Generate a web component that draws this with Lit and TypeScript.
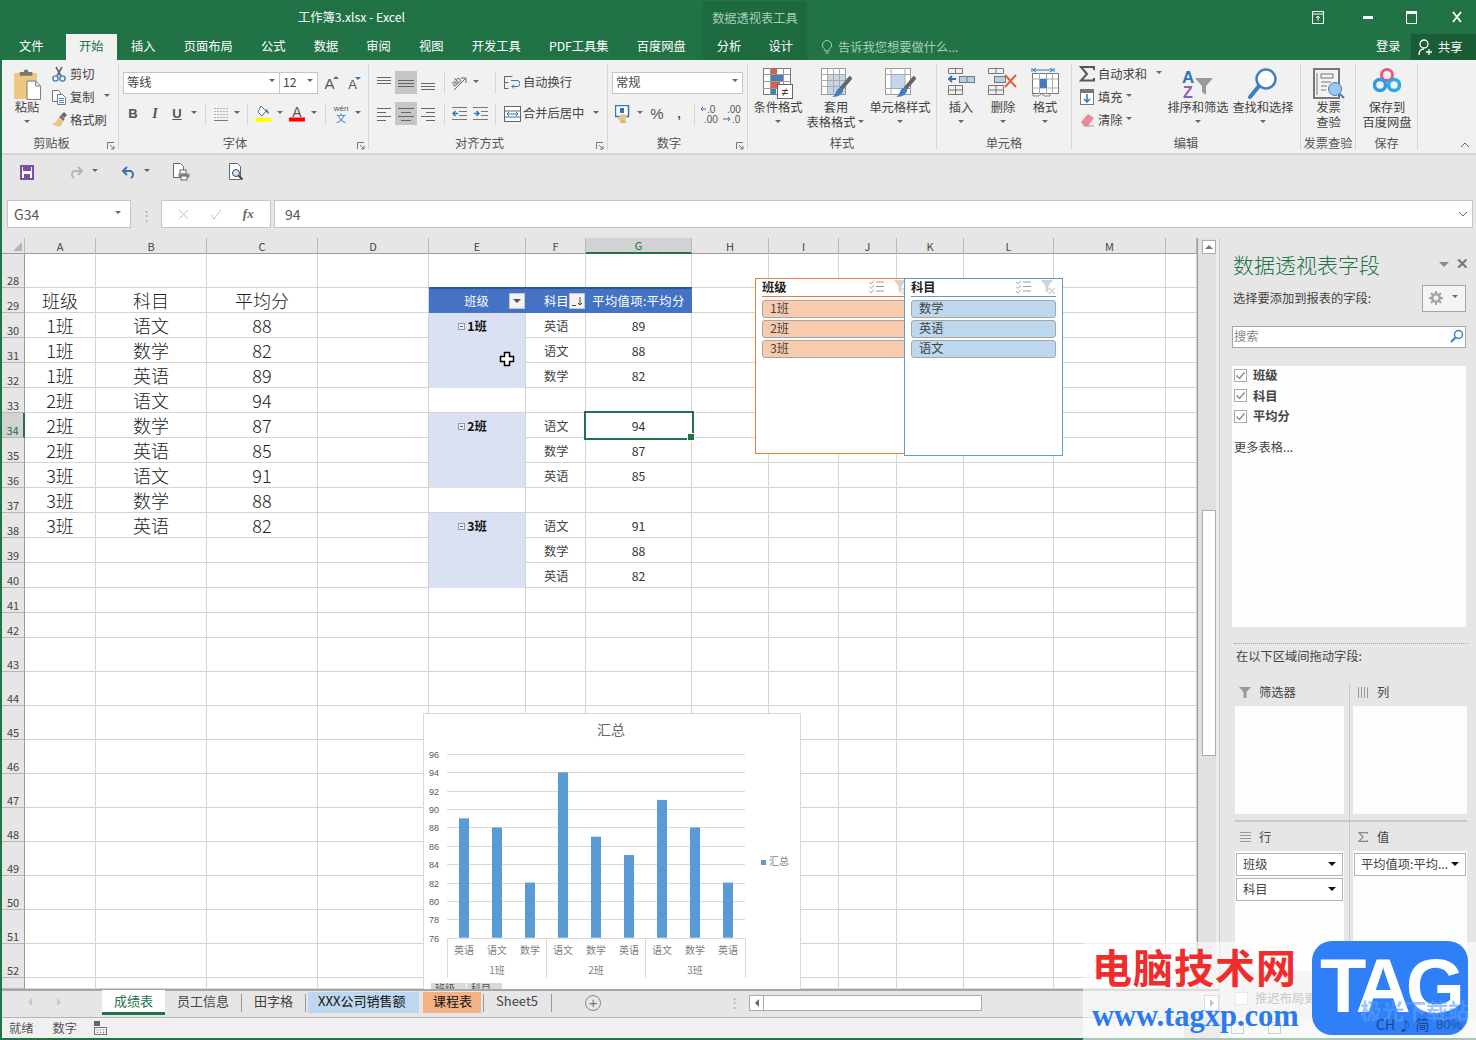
import { LitElement, html, svg, css, nothing } from 'lit';
import { customElement } from 'lit/decorators.js';
import { classMap } from 'lit/directives/class-map.js';

const line = (d: string, w = 16, h = 14, c = '#666') =>
  html`<svg width=${w} height=${h} viewBox="0 0 ${w} ${h}"><path d=${d} stroke=${c} fill="none" /></svg>`;

const ic = {
  paste: html`<svg width="29" height="32" viewBox="0 0 30 33"><rect x="1" y="5" width="24" height="27" rx="1" fill="#efc77f" /><path d="M7 8V4h4a2.5 2.5 0 0 1 5 0h4v4z" fill="#777" /><path d="M14.5 13.5h9l5 5v14h-14z" fill="#fff" stroke="#777" /><path d="M23.5 13.5v5h5" fill="none" stroke="#777" /></svg>`,
  cut: html`<svg width="16" height="16" viewBox="0 0 16 16"><path d="M5 1l5 9M11 1L6 10" stroke="#666" stroke-width="1.6" fill="none" /><circle cx="4.5" cy="12.5" r="2.6" fill="none" stroke="#3f7fc1" stroke-width="1.4" /><circle cx="11.5" cy="12.5" r="2.6" fill="none" stroke="#3f7fc1" stroke-width="1.4" /></svg>`,
  copy: html`<svg width="16" height="15" viewBox="0 0 16 15"><path d="M1.5.5h6l2 2v9h-8z" fill="#fff" stroke="#777" /><path d="M6.5 4.5h5l3 3v7h-8z" fill="#fff" stroke="#777" /><path d="M8 8.5h5M8 10.5h5M8 12.5h5" stroke="#4a7fb5" /></svg>`,
  brush: html`<svg width="17" height="15" viewBox="0 0 17 15"><path d="M9 4l4 4-3 6c-3 1-6 0-9-2 2 0 5-3 8-8z" fill="#e8c48a" /><path d="M10 3l3-3 3 3-3 3z" fill="#666" /><path d="M9 4l4 4" stroke="#666" stroke-width="2" /></svg>`,
  borders: line('M1.5 1.5h1m2 0h1m2 0h1m2 0h1m2 0h1M1.5 4.5h1m2 0h1m2 0h1m2 0h1m2 0h1M1.5 7.5h1m2 0h1m2 0h1m2 0h1m2 0h1M1.5 10.5h1m2 0h1m2 0h1m2 0h1m2 0h1M1 13.5h14', 16, 14, '#777'),
  fill: html`<svg width="17" height="17" viewBox="0 0 17 17"><path d="M6 1l5 5-4 5-4-4z" fill="#fff" stroke="#666" /><path d="M11 4c2 1 3 3 3 5-2-1-3-2-4-3z" fill="#3f7fc1" /><rect y="13" width="16" height="4" fill="#ffff00" /></svg>`,
  fontColor: html`<svg width="17" height="17" viewBox="0 0 17 17"><text x="8" y="12" text-anchor="middle" font-size="14" font-family="Liberation Sans" fill="#555">A</text><rect y="12.500" width="16" height="4" fill="#f00" /></svg>`,
  wen: html`<svg width="20" height="21" viewBox="0 0 20 21"><text x="10" y="8" text-anchor="middle" font-size="8" font-family="Liberation Sans" fill="#555">wén</text><text x="10" y="19" text-anchor="middle" font-size="10" font-family="Noto Sans CJK SC" fill="#3f7fc1">文</text></svg>`,
  orient: html`<svg width="20" height="20" viewBox="0 0 20 20"><text x="3" y="12" font-size="9" font-family="Liberation Sans" fill="#555" transform="rotate(-40 7 10)">ab</text><path d="M5 17L16 6M12 5h5v5" stroke="#666" fill="none" /></svg>`,
  indentL: html`<svg width="16" height="14" viewBox="0 0 16 14"><path d="M1 .5h15M8 4.500h8M8 8.500h8M1 12.500h15" stroke="#777" fill="none" /><path d="M7 6.500H2M4.500 4l-2.500 2.500L4.500 9" stroke="#2f75b5" stroke-width="1.400" fill="none" /></svg>`,
  indentR: html`<svg width="16" height="14" viewBox="0 0 16 14"><path d="M0 .5h15M8 4.500h7M8 8.500h7M0 12.500h15" stroke="#777" fill="none" /><path d="M1 6.500h5M3.500 4L6 6.500 3.500 9" stroke="#2f75b5" stroke-width="1.400" fill="none" /></svg>`,
  wrap: html`<svg width="16" height="15" viewBox="0 0 16 15"><path d="M.5 1v13M.5 1.500h8M.5 7.500h4M.5 13.500h4" stroke="#666" fill="none" /><path d="M7 5.500h6a2 2 0 0 1 0 6H8M10 9.500l-2 2 2 2" stroke="#2f75b5" fill="none" /></svg>`,
  merge: html`<svg width="17" height="16" viewBox="0 0 17 16"><rect x=".5" y=".5" width="16" height="15" fill="#fff" stroke="#666" /><path d="M.5 5h16M.5 11h16" stroke="#666" /><path d="M3 8h11M5 6l-2 2 2 2M12 6l2 2-2 2" stroke="#2f75b5" fill="none" /></svg>`,
  numFmt: html`<svg width="17" height="18" viewBox="0 0 17 18"><rect x=".5" y=".5" width="13" height="11" fill="#fff" stroke="#2f75b5" stroke-width="1.500" /><rect x="5" y="3" width="4" height="5" fill="#2f75b5" /><ellipse cx="8" cy="11" rx="4" ry="1.800" fill="#e8c48a" /><ellipse cx="7" cy="14" rx="4" ry="1.800" fill="#e8c48a" /><ellipse cx="8" cy="16.500" rx="3" ry="1.500" fill="#d9b070" /></svg>`,
  decUp: html`<svg width="20" height="20" viewBox="0 0 20 20"><text x="7" y="9" font-size="10" font-family="Liberation Sans" fill="#555">.0</text><text x="4" y="19" font-size="10" font-family="Liberation Sans" fill="#555">.00</text><path d="M6 5H1M3 3L1 5l2 2" stroke="#2f75b5" fill="none" /></svg>`,
  decDown: html`<svg width="20" height="20" viewBox="0 0 20 20"><text x="5" y="9" font-size="10" font-family="Liberation Sans" fill="#555">.00</text><text x="10" y="19" font-size="10" font-family="Liberation Sans" fill="#555">.0</text><path d="M1 15h7M6 13l2 2-2 2" stroke="#2f75b5" fill="none" /></svg>`,
  cond: html`<svg width="30" height="31" viewBox="0 0 30 31"><rect x=".5" y=".5" width="27" height="26" fill="#fff" stroke="#777" /><path d="M7.500 0v27M20.500 0v27M0 6.500h27M0 13.500h27M0 20.500h27" stroke="#999" /><rect x="8" y="1" width="6" height="5" fill="#e2603d" /><rect x="8" y="7" width="12" height="6" fill="#4a7fb5" /><rect x="8" y="14" width="9" height="6" fill="#e2603d" /><rect x="8" y="21" width="5" height="6" fill="#4a7fb5" /><rect x="14.500" y="16.500" width="15" height="14" fill="#fff" stroke="#666" /><text x="22" y="28" text-anchor="middle" font-size="12" font-family="Liberation Sans" fill="#333">≠</text></svg>`,
  tableFmt: html`<svg width="31" height="31" viewBox="0 0 31 31"><rect x=".5" y=".5" width="24" height="26" fill="#fff" stroke="#999" /><rect x="6" y="7" width="18" height="19" fill="#c5d6e8" /><path d="M6.500 0v27M12.500 0v27M18.500 0v27M0 6.500h25M0 12.500h25M0 18.500h25" stroke="#aaa" /><path d="M30 9L20 21" stroke="#666" stroke-width="4" /><path d="M19 20c3 0 4 3 2 5-2 3-6 4-10 4 2-1 3-3 4-5 1-3 2-4 4-4z" fill="#3f7fc1" /></svg>`,
  cellStyle: html`<svg width="31" height="31" viewBox="0 0 31 31"><rect x=".5" y=".5" width="25" height="26" fill="#fff" stroke="#999" /><rect x="6" y="7" width="14" height="13" fill="#c5d6e8" /><path d="M6 0v27M20 0v27M0 6.500h25M0 20.500h25" stroke="#aaa" /><path d="M30 9L20 21" stroke="#666" stroke-width="4" /><path d="M19 20c3 0 4 3 2 5-2 3-6 4-10 4 2-1 3-3 4-5 1-3 2-4 4-4z" fill="#3f7fc1" /></svg>`,
  insert: html`<svg width="28" height="27" viewBox="0 0 28 27"><path d="M1.500.5h14v5h-14zM8.500 0v5.500M1.500 17.500h14v9h-14zM8.500 17v9M1 22h14" fill="none" stroke="#777" /><path d="M9 11H2M5 8l-3 3 3 3" fill="none" stroke="#2f75b5" stroke-width="1.800" /><rect x="12.500" y="8.500" width="15" height="6" fill="#b8cfe6" stroke="#777" /><path d="M20 8v6" stroke="#777" /></svg>`,
  del: html`<svg width="30" height="27" viewBox="0 0 30 27"><path d="M.5.500h15v5h-15zM8 0v5.500M.5 17.500h15v9h-15zM8 17v9M0 22h15" fill="none" stroke="#777" /><rect x="6.500" y="8.500" width="11" height="6" fill="#b8cfe6" stroke="#777" /><path d="M17 7l11 12M28 7L17 19" stroke="#e2603d" stroke-width="2" /></svg>`,
  format: html`<svg width="28" height="29" viewBox="0 0 28 29"><path d="M1 0v4M23 0v4M2 2h20M5 0L2 2l3 2M19 0l3 2-3 2" fill="none" stroke="#2f75b5" /><rect x="1.500" y="5.500" width="26" height="20" fill="#fff" stroke="#777" /><path d="M8.500 5v21M15.500 5v21M21.500 5v21M1 11h26M1 20h26" stroke="#aaa" /><rect x="9" y="11" width="7" height="9" fill="#3f7fc1" /><path d="M2 26v2h6l2-2M11 26l2 2h6v-2" fill="none" stroke="#888" /></svg>`,
  sigma: html`<svg width="16" height="16" viewBox="0 0 16 16"><path d="M15 4V1H2l6 7-6 6.500h13V12" fill="none" stroke="#555" stroke-width="2" /></svg>`,
  fillDown: html`<svg width="14" height="16" viewBox="0 0 14 16"><rect x=".5" y=".5" width="13" height="15" fill="#fff" stroke="#777" /><rect x="1" y="1" width="12" height="3" fill="#777" /><path d="M7 5v8M4 10l3 3 3-3" fill="none" stroke="#2f75b5" stroke-width="1.500" /></svg>`,
  eraser: html`<svg width="15" height="14" viewBox="0 0 15 14"><path d="M1 9l7-8 6 4-6 8H4z" fill="#e88a98" /><path d="M4 13h10" stroke="#999" /></svg>`,
  sort: html`<svg width="32" height="33" viewBox="0 0 32 33"><text x="0" y="15" font-size="17" font-weight="700" font-family="Liberation Sans" fill="#2f75b5">A</text><text x="1" y="30" font-size="16" font-weight="700" font-family="Liberation Sans" fill="#8e5fb5">Z</text><path d="M13 10h18l-7 8v9l-4-3v-6z" fill="#999" /></svg>`,
  find: html`<svg width="30" height="32" viewBox="0 0 30 32"><circle cx="18" cy="11" r="9.500" fill="#fff" stroke="#3f7fc1" stroke-width="2.500" /><path d="M11 18L2 29" stroke="#3f7fc1" stroke-width="4" stroke-linecap="round" /></svg>`,
  invoice: html`<svg width="32" height="32" viewBox="0 0 32 32"><rect x="1" y="1" width="25" height="29" fill="#f3f3f3" stroke="#777" stroke-width="2" /><rect x="8" y="6" width="12" height="4" fill="none" stroke="#777" /><path d="M4 5v22M8 14h10M8 18h6M8 22h5" stroke="#777" /><circle cx="22" cy="21" r="6.500" fill="#9cc8ec" stroke="#3f7fc1" /><path d="M27 26l4 4" stroke="#3f7fc1" stroke-width="2" /></svg>`,
  baidu: html`<svg width="28" height="26" viewBox="0 0 28 26"><circle cx="14" cy="7" r="5.500" fill="none" stroke="#e85a7a" stroke-width="3" /><circle cx="7" cy="17" r="5.500" fill="none" stroke="#2f9be8" stroke-width="3.500" /><circle cx="21" cy="17" r="5.500" fill="none" stroke="#2fa8e8" stroke-width="3.500" /></svg>`,
  launcher: html`<svg width="8" height="8" viewBox="0 0 8 8"><path d="M.5 7V.5H7M3 3l4 4M7 4v3H4" fill="none" stroke="#777" /></svg>`,
  save: html`<svg width="14" height="15" viewBox="0 0 14 15"><path d="M1 1h12v13H1z" fill="#fff" stroke="#7b4fa3" stroke-width="2" /><rect x="3" y="1" width="8" height="5" fill="#7b4fa3" /><rect x="4" y="9" width="6" height="5" fill="#7b4fa3" /></svg>`,
  redo: html`<svg width="16" height="14" viewBox="0 0 16 14"><path d="M14 6H6a4 4 0 0 0 0 7M10 2l4 4-4 4" fill="none" stroke="#b5b5b5" stroke-width="2" /></svg>`,
  undo: html`<svg width="16" height="14" viewBox="0 0 16 14"><path d="M2 6h8a4 4 0 0 1 0 7M6 2L2 6l4 4" fill="none" stroke="#3f6fb5" stroke-width="2" /></svg>`,
  printPrev: html`<svg width="17" height="18" viewBox="0 0 17 18"><path d="M.5.5h7l3 3v11H.5z" fill="#fff" stroke="#666" /><rect x="7" y="7" width="6" height="4" fill="#fff" stroke="#666" /><rect x="5.500" y="10.500" width="11" height="4" fill="#888" /><rect x="8" y="13" width="6" height="4" fill="#fff" stroke="#666" /></svg>`,
  preview: html`<svg width="15" height="18" viewBox="0 0 15 18"><path d="M.5.5h8l3 3v13H.5z" fill="#fff" stroke="#666" /><circle cx="7" cy="10" r="3.500" fill="#cfe2f3" stroke="#444" /><path d="M9.500 12.500l4 4" stroke="#444" stroke-width="2" /></svg>`,
  check: html`<svg class="chk" width="13" height="13" viewBox="0 0 13 13"><rect x=".5" y=".5" width="12" height="12" fill="#fff" stroke="#aaa" /><path d="M2.500 6.500l3 3 5-6" fill="none" stroke="#8f8f8f" stroke-width="1.500" /></svg>`,
  multi: html`<svg width="15" height="13" viewBox="0 0 15 13"><path d="M7 2h8M7 6.500h8M7 11h8" stroke="#999" /><path d="M0 2l2 2 3-3.500M0 6.500l2 2 3-3.500M0 11l2 2 3-3.500" fill="none" stroke="#aaa" /></svg>`,
  clear: html`<svg width="15" height="14" viewBox="0 0 15 14"><path d="M0 0h12L7.500 6v7L4.500 11V6z" fill="#d2d2d2" /><path d="M8 8l6 6M14 8l-6 6" stroke="#d2d2d2" stroke-width="1.500" /></svg>`,
  gear: html`<svg width="14" height="14" viewBox="0 0 14 14"><circle cx="7" cy="7" r="3.800" fill="none" stroke="#a5a5a5" stroke-width="2.600" /><path d="M7 0v3M7 11v3M0 7h3M11 7h3M2 2l2 2M10 10l2 2M12 2l-2 2M2 12l2-2" stroke="#a5a5a5" stroke-width="2" /></svg>`,
  searchIcon: html`<svg width="14" height="14" viewBox="0 0 14 14"><circle cx="8.500" cy="5.500" r="4" fill="#fff" stroke="#3f7fc1" stroke-width="1.500" /><path d="M5.500 8.500L1 13" stroke="#3f7fc1" stroke-width="2" /></svg>`,
  funnel: html`<svg width="12" height="11" viewBox="0 0 12 11"><path d="M0 0h12L7.500 5v6h-3V5z" fill="#999" /></svg>`,
  cols: html`<svg width="10" height="11" viewBox="0 0 10 11"><path d="M.5 0v11M3.500 0v11M6.500 0v11M9.500 0v11" stroke="#999" /></svg>`,
  rows: html`<svg width="11" height="10" viewBox="0 0 11 10"><path d="M0 .5h11M0 3.500h11M0 6.500h11M0 9.500h11" stroke="#999" /></svg>`,
  vals: html`<svg width="10" height="10" viewBox="0 0 10 10"><path d="M10 2V.7H1l4 4.300-4 4.300h9V8" fill="none" stroke="#888" stroke-width="1.300" /></svg>`,
  bulb: html`<svg width="10" height="16" viewBox="0 0 10 16"><path d="M3 10.500C1 9 .5 7.500.5 6a4.500 4.500 0 0 1 9 0c0 1.500-.5 3-2.500 4.500v1.500H3zM3.500 14h3" fill="none" stroke="#a9cdb9" /></svg>`,
  person: html`<svg width="15" height="17" viewBox="0 0 15 17"><circle cx="6" cy="5" r="4" fill="none" stroke="#fff" stroke-width="1.300" /><path d="M1 16c0-4 2-6 5-6M11 10v6M8 13h6" fill="none" stroke="#fff" stroke-width="1.300" /></svg>`,
  calc: html`<svg width="13" height="14" viewBox="0 0 13 14"><rect x="0" y="0" width="6" height="5" fill="#666" /><path d="M0 6.500h13M.5 6v8M12.500 6v8M0 13.500h13M3 9h1m2 0h1m2 0h1M3 11.500h1m2 0h1m2 0h1" stroke="#777" fill="none" /></svg>`,
  sortBtn: html`<svg width="14" height="14" viewBox="0 0 14 14"><path d="M2 11.500h4M10 3v8M8 9l2 2 2-2" fill="none" stroke="#444" /></svg>`,
};

const VALIGN = {
  top: 'M0 2.500h14M0 5.500h14M0 8.500h14',
  mid: 'M0 5.500h16M0 8.500h16M0 11.500h16',
  bot: 'M0 8.500h14M0 11.500h14M0 14.500h14',
  left: 'M0 2.500h14M0 6.500h9M0 10.500h14M0 14.500h9',
  center: 'M0 2.500h16M3 6.500h10M0 10.500h16M3 14.500h10',
  right: 'M0 2.500h14M5 6.500h9M0 10.500h14M5 14.500h9',
};

const COLS: [string, number][] = [['A', 71], ['B', 111], ['C', 111], ['D', 111], ['E', 97], ['F', 60], ['G', 106], ['H', 77], ['I', 70], ['J', 58], ['K', 67], ['L', 90], ['M', 112], ['', 31]];
const ROW_NUMS = Array.from({ length: 26 }, (_, i) => 28 + i);

const RECORDS = [['班级', '科目', '平均分'], ['1班', '语文', '88'], ['1班', '数学', '82'], ['1班', '英语', '89'], ['2班', '语文', '94'], ['2班', '数学', '87'], ['2班', '英语', '85'], ['3班', '语文', '91'], ['3班', '数学', '88'], ['3班', '英语', '82']];
const PIVOT: Record<number, [string, string]> = { 30: ['英语', '89'], 31: ['语文', '88'], 32: ['数学', '82'], 34: ['语文', '94'], 35: ['数学', '87'], 36: ['英语', '85'], 38: ['语文', '91'], 39: ['数学', '88'], 40: ['英语', '82'] };
const CLASS_ROWS: Record<number, string> = { 30: '1班', 34: '2班', 38: '3班' };
const CHART = [['英语', 89], ['语文', 88], ['数学', 82], ['语文', 94], ['数学', 87], ['英语', 85], ['语文', 91], ['数学', 88], ['英语', 82]] as [string, number][];

const FONT = `'Noto Sans CJK SC','Noto Sans',sans-serif`;

@customElement('app-root')
export class AppRoot extends LitElement {
  static override styles = css`
    :host { display: block; position: relative; width: 1476px; height: 1040px; overflow: hidden; background: #e6e6e6; font-family: 'Noto Sans CJK SC','Noto Sans',sans-serif; font-size: 12.25px; color: #444; }
    * { box-sizing: border-box; }
    svg { display: block; flex: none; }
    .window { height: 1040px; border-left: 2px solid #217346; border-bottom: 2px solid #217346; display: flex; flex-direction: column; }
    .window > * { flex: none; }

    /* title and tabs */
    .titlebar { height: 34px; background: #217346; display: flex; color: #fff; }
    .doc { width: 701px; padding: 9px 0 0 296px; line-height: 16px; }
    .band-label { width: 104px; background: #1d6a3f; color: #a9cdb9; text-align: center; line-height: 16px; padding-top: 9px; margin-top: 1px; }
    .winbtns { flex: 1; display: flex; align-items: center; }
    .winbtns span { display: flex; justify-content: center; width: 16px; }
    .wb1 { margin-left: 503px; }
    .wb2 { margin-left: 34px; }
    .wb3 { margin-left: 27px; }
    .wb4 { margin-left: 30px; }
    .tabs { height: 26px; background: #217346; display: flex; color: #fff; line-height: 25px; white-space: nowrap; }
    .tab { padding: 0 14.100px; flex: none; }
    .tab.file { margin: 0 8px 0 3px; padding: 0 14px; }
    .tab.on { background: #f1f1f1; color: #217346; padding: 0 13.500px; }
    .tabset { display: flex; width: 701px; flex: none; }
    .band { display: flex; background: #1d6a3f; width: 104px; flex: none; }
    .band .tab { padding: 0 13.700px; }
    .tell { display: flex; align-items: center; gap: 6px; color: #a9cdb9; width: 569px; flex: none; padding-left: 15px; }
    .login { width: 35px; flex: none; }
    .share { width: 65px; flex: none; background: #1a5c36; display: flex; align-items: center; gap: 5px; padding-left: 7px; }

    /* ribbon */
    .ribbon { height: 95px; background: #f1f1f1; border-bottom: 2px solid #d4d4d4; padding-top: 4px; display: flex; }
    .group { height: 86px; border-right: 1px solid #d5d5d5; display: flex; flex-direction: column; flex: none; }
    .body { height: 70px; }
    .foot { height: 16px; display: flex; line-height: 19px; color: #555; }
    .foot span { flex: 1; text-align: center; white-space: nowrap; }
    .foot svg { margin: 8px 3px 0 6px; }
    .g-clip { width: 117px; } .g-font { width: 250px; } .g-align { width: 239px; } .g-num { width: 140px; }
    .g-style { width: 189px; } .g-cell { width: 135px; } .g-edit { width: 229px; } .g-inv { width: 55px; } .g-save { width: 62px; }
    .flexb { display: flex; }
    .collapse { flex: 1; display: flex; justify-content: flex-end; align-items: flex-end; padding: 0 6px 4px 0; }
    .big { display: flex; flex-direction: column; align-items: center; padding-top: 4px; flex: none; line-height: 15px; white-space: nowrap; }
    .big .pic { height: 32px; display: flex; align-items: flex-start; justify-content: center; }
    .big .ln { height: 15px; display: flex; align-items: center; justify-content: center; }
    .w30 { width: 30px; } .w42 { width: 42px; } .w52 { width: 52px; } .w60 { width: 60px; } .w62 { width: 62px; } .w64 { width: 64px; } .w55 { width: 55px; }
    .small { display: flex; flex-direction: column; flex: none; margin-top: -1px; }
    .small.edit { width: 89px; }
    .small > div { height: 22.700px; display: flex; align-items: center; white-space: nowrap; }
    .small .slot { width: 18px; margin-right: 2px; display: flex; justify-content: center; }
    .dn { width: 12px; height: 6px; display: flex; justify-content: center; flex: none; }
    .dn::after { content: ''; border: 3px solid transparent; border-top: 3px solid #666; border-bottom: 0; }
    .dn.n { width: 10px; }
    .dn.m6 { margin-left: 6px; }
    .dn.inl { width: 10px; }
    .dn.gd { width: 8px; }
    .row { display: flex; align-items: center; }
    .r1 { margin-top: 7px; height: 23px; }
    .r2 { margin-top: 8px; height: 23px; }
    .pl4 { padding-left: 4px; }
    .pl3 { padding-left: 3px; }
    .pl6 { padding-left: 6px; }
    .ib { width: 22px; height: 23px; display: flex; align-items: center; justify-content: center; flex: none; }
    .ib.w23 { width: 23px; }
    .ib.on { background: #c6c6c6; }
    .sep { width: 1px; height: 22px; background: #d5d5d5; margin: 0 4px 0 5px; flex: none; }
    .sep.wide { margin: 0 8px 0 13px; }
    .sep.tight { margin-right: 3px; }
    .sep.afterIndent { margin: 0 8px 0 3px; }
    .sep.num { margin: 0 4px; }
    .ml1n { margin-left: -1px; }
    .ml2 { margin-left: 2px; } .ml3 { margin-left: 3px; } .ml8 { margin-left: 8px; } .ml10 { margin-left: 10px; }
    .combo { height: 22px; background: #fff; border: 1px solid #c6c6c6; display: flex; align-items: center; justify-content: space-between; padding: 0 0 1px 3px; flex: none; }
    .combo .dn { width: 14px; }
    .c-font { width: 157px; } .c-size { width: 39px; margin-left: -1px; } .c-num { width: 131px; }
    .let { font: 700 13px 'Liberation Sans',sans-serif; color: #555; }
    .let.i { font-style: italic; font-family: 'Liberation Serif',serif; font-size: 14px; }
    .let.u { text-decoration: underline; }
    .grow { position: relative; font: 15px 'Liberation Sans',sans-serif; color: #555; padding: 2px 4px 0 0; }
    .grow.lo { font-size: 13px; padding-top: 3px; }
    .grow i { position: absolute; right: 0; top: 3px; border: 3px solid transparent; border-top: 0; border-bottom: 3px solid #2f75b5; }
    .grow i.d { border-bottom: 0; border-top: 3px solid #2f75b5; }
    .pct { font: 15px 'Liberation Sans',sans-serif; color: #555; }
    .tx { white-space: nowrap; padding-bottom: 2px; }
    .tool { width: 19px; display: flex; justify-content: flex-start; }

    /* quick access and formula bar */
    .qat { height: 35px; display: flex; align-items: center; padding: 0 0 1px 18px; }
    .qat .dn { width: 12px; }
    .m1 { margin-left: 34px; } .m2 { margin-left: 5px; } .m3 { margin-left: 20px; } .m4 { margin-left: 4px; } .m5 { margin-left: 20px; } .m6 { margin-left: 39px; }
    .fbar { height: 48px; padding: 10px 3px 10px 5px; display: flex; }
    .box { background: #fff; border: 1px solid #c6c6c6; height: 28px; display: flex; align-items: center; font-size: 14px; padding-bottom: 1px; }
    .name { width: 124px; justify-content: space-between; padding: 0 6px 1px; color: #555; }
    .dots { width: 30px; display: flex; justify-content: center; align-items: center; color: #aaa; font-size: 13px; }
    .fxs { width: 110px; justify-content: space-around; padding: 0 6px; margin-right: 3px; color: #bbb; }
    .fx { font: italic 700 13px 'Liberation Serif',serif; color: #666; }
    .input { flex: 1; justify-content: space-between; padding: 0 4px 1px 10px; color: #555; }

    /* main */
    .main { display: flex; height: 780px; }
    .left { width: 1217px; display: flex; flex-direction: column; }
    .upper { height: 751px; display: flex; flex: none; }
    .sheet { position: relative; width: 1195px; height: 751px; overflow: hidden; background: #fff; flex: none; }
    .grid { display: grid; grid-template-columns: 23px 71px 111px 111px 111px 97px 60px 106px 77px 70px 58px 67px 90px 112px 31px; grid-template-rows: 16px 34px repeat(14, 25px) repeat(10, 34px) 11px; }
    .c { border-right: 1px solid #d4d4d4; border-bottom: 1px solid #d4d4d4; display: flex; align-items: center; justify-content: center; color: #111; white-space: nowrap; overflow: visible; }
    .ch { background: #e6e6e6; border-right-color: #b8b8b8; border-bottom-color: #9a9a9a; font-size: 11px; color: #444; }
    .ch.act { background: #d2d2d2; color: #217346; border-bottom: 2px solid #217346; }
    .rh { background: #e6e6e6; border-right-color: #9a9a9a; border-bottom-color: #b8b8b8; font-size: 11px; color: #444; align-items: flex-end; line-height: 13px; }
    .rh.act { background: #d2d2d2; color: #217346; border-right: 2px solid #217346; }
    .corner { background: #e6e6e6; border-right-color: #b8b8b8; border-bottom-color: #9a9a9a; justify-content: flex-end; align-items: flex-end; padding: 0 2px 2px 0; }
    .corner::after { content: ''; border-left: 9px solid transparent; border-bottom: 9px solid #b5b5b5; }
    .lg { font-size: 18px; color: #222; font-weight: 300; }
    .ph { background: #4472c4; color: #fff; border-color: #4472c4; box-shadow: 0 -1px 0 #2f5597, inset 0 1px 0 #2f5597; justify-content: center; gap: 4px; padding-top: 2px; }
    .ph.fh { justify-content: flex-start; padding-left: 18px; gap: 0; }
    .ph.gh { letter-spacing: .4px; }
    .fbtn { width: 16px; height: 16px; background: #f3f3f3; border: 1px solid #c6c6c6; display: flex; align-items: center; justify-content: center; flex: none; }
    .fbtn.dd::after { content: ''; border: 4px solid transparent; border-top: 4px solid #555; border-bottom: 0; }
    .ph.eh .fbtn { margin-left: 16px; margin-right: -35px; }
    .pc { background: #d9e1f2; border-bottom-color: #d9e1f2; font-weight: 700; gap: 2px; padding: 2px 9px 0 0; }
    .minus { width: 7px; height: 7px; border: 1px solid #999; display: flex; align-items: center; justify-content: center; background: #eef; }
    .minus::after { content: ''; width: 3px; height: 1px; background: #666; }
    .pf { justify-content: flex-start; padding: 2px 0 0 18px; color: #444; }
    .pv { color: #333; padding-top: 2px; }
    .sel { position: relative; z-index: 2; outline: 2px solid #217346; outline-offset: 0; border-color: transparent; }
    .sel::after { content: ''; position: absolute; right: -4px; bottom: -4px; width: 6px; height: 6px; background: #217346; border: 1px solid #fff; }

    .cursor { position: absolute; left: 497px; top: 113px; z-index: 6; }
    .slicer { position: absolute; top: 40px; background: #fff; padding: 0 6px; z-index: 4; }
    .s1 { left: 753px; width: 161px; height: 176px; border: 1px solid #ed7d31; }
    .s2 { left: 902px; width: 159px; height: 178px; border: 1px solid #5b9bd5; z-index: 5; }
    .s-head { height: 18px; display: flex; align-items: center; font-weight: 700; color: #222; padding-bottom: 2px; }
    .s1 .s-head { border-bottom: 1px solid #ed7d31; }
    .s2 .s-head { border-bottom: 1px solid #5b9bd5; }
    .s-head span { flex: 1; }
    .s-head svg + svg { margin: 0 0 0 10px; }
    .s-item { height: 18px; margin-top: 2px; border: 1px solid #a6a6a6; border-radius: 3px; padding-left: 7px; line-height: 14px; color: #444; }
    .s1 .s-item { background: #f8cbad; }
    .s2 .s-item { background: #bdd7ee; }
    .s-list { padding-top: 1px; }
    .chart { position: absolute; left: 421px; top: 475px; z-index: 3; }

    .vscroll { width: 22px; background: #e0e0e0; border-left: 1px solid #9a9a9a; padding-left: 4px; border-right: 3px solid #ececec; flex: none; }
    .vup { width: 14px; height: 14px; background: #fff; border: 1px solid #ababab; margin-top: 2px; display: flex; align-items: center; justify-content: center; }
    .vup::after { content: ''; border: 4px solid transparent; border-top: 0; border-bottom: 4px solid #777; }
    .vthumb { width: 14px; height: 246px; background: #fff; border: 1px solid #ababab; margin-top: 256px; }

    /* sheet tabs */
    .tabbar { height: 29px; flex: none; border-top: 2px solid #a6a6a6; border-bottom: 1px solid #b5b5b5; display: flex; align-items: flex-start; font-size: 13px; color: #444; }
    .nav { width: 100px; flex: none; display: flex; padding: 7px 0 0 26px; gap: 25px; }
    .nav i { border: 4px solid transparent; border-left: 0; border-right: 4px solid #c8c8c8; }
    .nav i + i { border-right: 0; border-left: 4px solid #c8c8c8; }
    .st { height: 21px; margin-top: 1px; padding: 0 12px; line-height: 18px; white-space: nowrap; flex: none; }
    .st.act { height: 25px; margin-top: -1px; background: #fff; color: #217346; border-bottom: 3px solid #217346; line-height: 22px; width: 63px; }
    .st.blue { background: #bdd7ee; color: #111; padding: 0 0 0 10px; margin-left: 2px; width: 111px; }
    .st.orange { background: #f4b183; color: #111; padding: 0 10px; margin: 1px 2px 0 4px; width: 58px; }
    .st.s5 { width: 67px; }
    .tsep { width: 1px; height: 18px; background: #999; margin-top: 3px; flex: none; }
    .plus { margin: 4px 0 0 33px; width: 16px; height: 16px; border: 1px solid #888; border-radius: 50%; color: #777; display: flex; align-items: center; justify-content: center; font: 15px/14px 'Liberation Sans',sans-serif; flex: none; }
    .tdots { margin: 1px 0 0 127px; color: #aaa; width: 21px; flex: none; }
    .hs { display: flex; height: 16px; margin-top: 4px; flex: 1; }
    .hbtn { width: 15px; background: #fff; border: 1px solid #ababab; display: flex; align-items: center; justify-content: center; flex: none; }
    .hbtn::after { content: ''; border: 4px solid transparent; border-left: 0; border-right: 4px solid #666; }
    .hbtn.r::after { border-right: 0; border-left: 4px solid #666; }
    .hthumb { width: 218px; background: #fff; border: 1px solid #ababab; border-left: 0; flex: none; }
    .htrack { flex: 1; }

    /* field panel */
    .panel { width: 257px; border-left: 1px solid #c8c8c8; padding-left: 13px; display: flex; flex-direction: column; flex: none; }
    .panel > * { flex: none; }
    .p-head { margin-top: 12px; height: 28px; display: flex; align-items: center; }
    .p-title { flex: 1; font-size: 21px; color: #217346; line-height: 28px; font-weight: 300; }
    .p-tri { border: 5px solid transparent; border-top: 5px solid #888; border-bottom: 0; margin-right: 5px; }
    .p-x { width: 16px; font: 700 15px 'Liberation Sans',sans-serif; color: #777; margin-right: 6px; text-align: center; }
    .p-sel { margin-top: 7px; height: 27px; display: flex; align-items: center; justify-content: space-between; padding: 0 10px 1px 0; }
    .gearbtn { width: 44px; height: 27px; border: 1px solid #a6a6a6; display: flex; align-items: center; justify-content: center; gap: 8px; background: #f4f4f4; }
    .p-search { margin: 14px 10px 0 -1px; height: 22px; background: #fff; border: 1px solid #a6a6a6; display: flex; align-items: center; justify-content: space-between; padding: 0 1px 2px; color: #888; }
    .p-list { margin: 18px 10px 0 -1px; height: 261px; background: #fdfdfd; padding: 0 2px; color: #444; }
    .p-field { height: 20.500px; display: flex; align-items: center; gap: 6px; font-weight: 700; }
    .p-field:first-child { margin-top: -1px; }
    .p-more { margin-top: 11px; }
    .p-dots { margin: 16px 8px 0 1px; border-top: 1px dotted #a6a6a6; }
    .p-drag { margin: 4px 0 0 3px; height: 16px; line-height: 16px; }
    .zones { margin: 19px 9px 0 2px; display: grid; grid-template-columns: 115px 117px; grid-template-rows: 139px 155px; }
    .zone { padding-bottom: 6px; display: flex; flex-direction: column; }
    .zone.a { border-right: 1px solid #c8c8c8; padding-right: 5px; }
    .zone.b { padding-left: 3px; }
    .zone.top { border-bottom: 2px solid #c8c8c8; }
    .z-head { height: 23px; flex: none; display: flex; align-items: center; gap: 8px; padding: 0 0 5px 4px; }
    .z-head .ico { width: 12px; display: flex; justify-content: center; }
    .zone.low .z-head { height: 29px; padding-bottom: 0; }
    .z-box { flex: 1; background: #fdfdfd; padding: 2px 1px; }
    .z-f { height: 23px; margin-bottom: 2px; border: 1px solid #b5b5b5; background: #fff; display: flex; align-items: center; justify-content: space-between; padding: 0 6px 2px; white-space: nowrap; }
    .z-f i { border: 4px solid transparent; border-top: 4px solid #111; border-bottom: 0; flex: none; }
    .p-defer { margin: 12px 10px 0 2px; display: flex; align-items: center; gap: 7px; color: #777; }
    .p-defer u { width: 13px; height: 13px; background: #fff; border: 1px solid #c8c8c8; }
    .p-defer span { flex: 1; }

    /* status */
    .status { height: 20px; background: #f0f0f0; display: flex; align-items: center; padding-left: 7px; color: #555; }
    .status .gp { margin-left: 19px; }
    .status .gp2 { margin-left: 17px; }
    .views { margin-left: 1077px; display: flex; gap: 24px; align-items: center; }
    .views b { width: 37px; height: 20px; background: #cfcfcf; display: block; margin-right: -14px; }
    .views s { width: 13px; height: 12px; border: 1px solid #888; display: block; }
    .slider { width: 68px; height: 1px; background: #888; margin-left: 26px; position: relative; }
    .slider i { position: absolute; left: 44px; top: -6px; width: 3px; height: 12px; background: #555; }

    /* watermark */
    .wm { position: absolute; left: 1083px; top: 942px; width: 393px; height: 98px; background: rgba(255, 255, 255, .6); z-index: 10; display: flex; }
    .wm-l { width: 229px; padding-left: 9px; }
    .wm-cn { font-size: 40px; font-weight: 700; color: #f12c2c; line-height: 46px; margin-top: 1px; letter-spacing: 1px; white-space: nowrap; }
    .wm-en { font: 700 30.500px/34px 'Liberation Serif',serif; color: #2b7bf0; margin-top: 10px; white-space: nowrap; }
    .wm-tag { position: relative; width: 156px; height: 94px; margin-top: -1px; background: #2f7ff7; border-radius: 20px; color: #fff; font: 700 76px/90px 'Liberation Sans',sans-serif; letter-spacing: -5px; padding-left: 8px; white-space: nowrap; overflow: hidden; }
    .wm-faint { position: absolute; left: 48px; top: 55px; font: 700 22px/26px 'Noto Sans CJK SC',sans-serif; letter-spacing: 0; color: rgba(90, 160, 255, .6); }
    .wm-ime { position: absolute; left: 64px; top: 74px; font: 14px/18px 'Noto Sans CJK SC',sans-serif; letter-spacing: 0; color: rgba(20, 50, 100, .75); }
    .wm-pct { position: absolute; left: 124px; top: 75px; font: 13px/18px 'Liberation Sans',sans-serif; letter-spacing: 0; color: rgba(20, 50, 100, .6); }
  `;

  private renderRibbon() {
    const big = (pic: unknown, w: string, l1: string, l2?: unknown) => html`<div class="big ${w}"><div class="pic">${pic}</div><div class="ln">${l1}</div><div class="ln">${l2 ?? html`<span class="dn"></span>`}</div></div>`;
    const foot = (t: string, launcher = false) => html`<div class="foot"><span>${t}</span>${launcher ? ic.launcher : nothing}</div>`;
    return html`<div class="ribbon">
      <div class="group g-clip">
        <div class="body flexb">
          <div class="big w30 ml10">
            <div class="pic">${ic.paste}</div><div class="ln">粘贴</div><div class="ln"><span class="dn"></span></div>
          </div>
          <div class="small ml8">
            <div><span class="slot">${ic.cut}</span>剪切</div>
            <div><span class="slot">${ic.copy}</span>复制<span class="dn m6"></span></div>
            <div><span class="slot">${ic.brush}</span>格式刷</div>
          </div>
        </div>
        ${foot('剪贴板', true)}
      </div>
      <div class="group g-font">
        <div class="body pl4">
          <div class="row r1">
            <div class="combo c-font">等线<span class="dn"></span></div>
            <div class="combo c-size">12<span class="dn"></span></div>
            <div class="ib w23 ml2"><span class="grow">A<i></i></span></div>
            <div class="ib w23"><span class="grow lo">A<i class="d"></i></span></div>
          </div>
          <div class="row r2 ml1n">
            <div class="ib"><span class="let">B</span></div>
            <div class="ib"><span class="let i">I</span></div>
            <div class="ib"><span class="let u">U</span></div>
            <span class="dn"></span><span class="sep"></span>
            <div class="ib">${ic.borders}</div><span class="dn n"></span><span class="sep"></span>
            <div class="ib">${ic.fill}</div><span class="dn"></span>
            <div class="ib">${ic.fontColor}</div><span class="dn"></span><span class="sep"></span>
            <div class="ib">${ic.wen}</div><span class="dn"></span>
          </div>
        </div>
        ${foot('字体', true)}
      </div>
      <div class="group g-align">
        <div class="body pl4">
          <div class="row r1">
            <div class="ib">${line(VALIGN.top, 14, 16)}</div>
            <div class="ib on">${line(VALIGN.mid, 16, 16)}</div>
            <div class="ib">${line(VALIGN.bot, 14, 16)}</div>
            <span class="sep tight"></span>
            <div class="ib">${ic.orient}</div><span class="dn"></span>
            <span class="sep wide"></span>
            <span class="tool">${ic.wrap}</span><span class="tx">自动换行</span>
          </div>
          <div class="row r2">
            <div class="ib">${line(VALIGN.left, 14, 16)}</div>
            <div class="ib on">${line(VALIGN.center, 16, 16)}</div>
            <div class="ib">${line(VALIGN.right, 14, 16)}</div>
            <span class="sep tight"></span>
            <div class="ib">${ic.indentL}</div>
            <div class="ib">${ic.indentR}</div>
            <span class="sep afterIndent"></span>
            <span class="tool">${ic.merge}</span><span class="tx">合并后居中</span><span class="dn m6"></span>
          </div>
        </div>
        ${foot('对齐方式', true)}
      </div>
      <div class="group g-num">
        <div class="body pl4">
          <div class="row r1"><div class="combo c-num">常规<span class="dn"></span></div></div>
          <div class="row r2">
            <div class="ib">${ic.numFmt}</div><span class="dn"></span>
            <div class="ib"><span class="pct">%</span></div>
            <div class="ib"><span class="let">,</span></div>
            <span class="sep num"></span>
            <div class="ib">${ic.decUp}</div>
            <div class="ib">${ic.decDown}</div>
          </div>
        </div>
        ${foot('数字', true)}
      </div>
      <div class="group g-style">
        <div class="body flexb pl4">
          ${big(ic.cond, 'w52', '条件格式')}
          <div class="ml2">${big(ic.tableFmt, 'w60', '套用', html`表格格式<span class="dn inl"></span>`)}</div>
          <div class="ml2">${big(ic.cellStyle, 'w64', '单元格样式')}</div>
        </div>
        ${foot('样式')}
      </div>
      <div class="group g-cell">
        <div class="body flexb pl3">
          ${big(ic.insert, 'w42', '插入')}${big(ic.del, 'w42', '删除')}${big(ic.format, 'w42', '格式')}
        </div>
        ${foot('单元格')}
      </div>
      <div class="group g-edit">
        <div class="body flexb pl6">
          <div class="small edit">
            <div><span class="slot">${ic.sigma}</span>自动求和<span class="dn m6"></span></div>
            <div><span class="slot">${ic.fillDown}</span>填充<span class="dn"></span></div>
            <div><span class="slot">${ic.eraser}</span>清除<span class="dn"></span></div>
          </div>
          ${big(ic.sort, 'w62', '排序和筛选')}
          <div class="ml3">${big(ic.find, 'w62', '查找和选择')}</div>
        </div>
        ${foot('编辑')}
      </div>
      <div class="group g-inv"><div class="body">${big(ic.invoice, 'w55', '发票', '查验')}</div>${foot('发票查验')}</div>
      <div class="group g-save"><div class="body">${big(ic.baidu, 'w62', '保存到', '百度网盘')}</div>${foot('保存')}</div>
      <div class="collapse">${line('M1 6l4-4 4 4', 10, 8, '#666')}</div>
    </div>`;
  }

  private renderCell(col: string, ci: number, r: number) {
    const key = `${col}${r}`;
    const rec = r >= 29 && r <= 38 && ci < 3 ? RECORDS[r - 29][ci] : '';
    if (rec) return html`<div class="c lg">${rec}</div>`;
    if (r === 29) {
      if (col === 'E') return html`<div class="c ph eh">班级<span class="fbtn dd"></span></div>`;
      if (col === 'F') return html`<div class="c ph fh">科目<span class="fbtn">${ic.sortBtn}</span></div>`;
      if (col === 'G') return html`<div class="c ph gh">平均值项:平均分</div>`;
    }
    if (col === 'E' && ((r >= 30 && r <= 32) || (r >= 34 && r <= 36) || (r >= 38 && r <= 40))) {
      return html`<div class="c pc">${CLASS_ROWS[r] ? html`<span class="minus"></span>${CLASS_ROWS[r]}` : nothing}</div>`;
    }
    const p = PIVOT[r];
    if (p && col === 'F') return html`<div class="c pf">${p[0]}</div>`;
    if (p && col === 'G') return html`<div class=${classMap({ c: true, pv: true, sel: key === 'G34' })}>${p[1]}</div>`;
    return html`<div class="c"></div>`;
  }

  private renderChart() {
    const x0 = 447 - 423, y76 = 937.7 - 713, unit = 9.185;
    const ticks = [76, 78, 80, 82, 84, 86, 88, 90, 92, 94, 96];
    return html`<svg class="chart" width="378" height="276" viewBox="0 0 378 276" font-family=${FONT}>
      <rect x=".5" y=".5" width="377" height="280" fill="#fff" stroke="#d9d9d9" />
      <text x="188" y="22" text-anchor="middle" font-size="14" fill="#666">汇总</text>
      ${ticks.map((t) => {
        const y = Math.round(y76 - (t - 76) * unit) + .5;
        return svg`<path d="M${x0} ${y}h298" stroke="#d9d9d9" /><text x="11" y=${y + 3} text-anchor="middle" font-size="9" font-family="Liberation Sans" fill="#595959">${t}</text>`;
      })}
      ${CHART.map(([label, v], i) => {
        const cx = x0 + 17 + i * 33;
        const h = (v - 76) * unit;
        return svg`<rect x=${cx - 5} y=${y76 - h} width="10" height=${h} fill="#5b9bd5" /><text x=${cx} y="241" text-anchor="middle" font-size="10" fill="#7f7f7f">${label}</text>`;
      })}
      <path d="M24.500 225v40M123.500 225v40M222.500 225v40M322.500 225v40" stroke="#d9d9d9" />
      ${['1班', '2班', '3班'].map((t, i) => svg`<text x=${74 + i * 99} y="261" text-anchor="middle" font-size="10" fill="#7f7f7f">${t}</text>`)}
      <rect x="338" y="147" width="5" height="5" fill="#5b9bd5" />
      <text x="346" y="152" font-size="10" fill="#7f7f7f">汇总</text>
      <rect x="8" y="270" width="35" height="8" fill="#d9d9d9" /><rect x="44" y="270" width="35" height="8" fill="#d9d9d9" />
      <text x="12" y="279" font-size="10" fill="#555">班级</text><text x="48" y="279" font-size="10" fill="#555">科目</text>
    </svg>`;
  }

  private renderSheet() {
    return html`<div class="sheet">
      <div class="grid">
        <div class="c corner"></div>
        ${COLS.map(([c]) => html`<div class=${classMap({ c: true, ch: true, act: c === 'G' })}>${c}</div>`)}
        ${ROW_NUMS.map((r) => html`
          <div class=${classMap({ c: true, rh: true, act: r === 34 })}>${r === 53 ? '' : r}</div>
          ${COLS.map(([c], i) => this.renderCell(c, i, r))}
        `)}
      </div>
      <div class="slicer s1">
        <div class="s-head"><span>班级</span>${ic.multi}${ic.clear}</div>
        <div class="s-list">${['1班', '2班', '3班'].map((t) => html`<div class="s-item">${t}</div>`)}</div>
      </div>
      <div class="slicer s2">
        <div class="s-head"><span>科目</span>${ic.multi}${ic.clear}</div>
        <div class="s-list">${['数学', '英语', '语文'].map((t) => html`<div class="s-item">${t}</div>`)}</div>
      </div>
      ${this.renderChart()}
      <svg class="cursor" width="16" height="16" viewBox="0 0 16 16"><path d="M5.500 1.500h5v4h4v5h-4v4h-5v-4h-4v-5h4z" fill="#fff" stroke="#000" stroke-width="1.500" /></svg>
    </div>`;
  }

  private renderPanel() {
    return html`<div class="panel">
      <div class="p-head"><span class="p-title">数据透视表字段</span><i class="p-tri"></i><span class="p-x">✕</span></div>
      <div class="p-sel"><span>选择要添加到报表的字段:</span><div class="gearbtn">${ic.gear}<span class="dn gd"></span></div></div>
      <div class="p-search">搜索${ic.searchIcon}</div>
      <div class="p-list">
        ${['班级', '科目', '平均分'].map((t) => html`<div class="p-field">${ic.check}${t}</div>`)}
        <div class="p-more">更多表格...</div>
      </div>
      <div class="p-dots"></div>
      <div class="p-drag">在以下区域间拖动字段:</div>
      <div class="zones">
        <div class="zone a top"><div class="z-head"><span class="ico">${ic.funnel}</span>筛选器</div><div class="z-box"></div></div>
        <div class="zone b top"><div class="z-head"><span class="ico">${ic.cols}</span>列</div><div class="z-box"></div></div>
        <div class="zone a low"><div class="z-head"><span class="ico">${ic.rows}</span>行</div>
          <div class="z-box"><div class="z-f">班级<i></i></div><div class="z-f">科目<i></i></div></div></div>
        <div class="zone b low"><div class="z-head"><span class="ico">${ic.vals}</span>值</div>
          <div class="z-box"><div class="z-f">平均值项:平均...<i></i></div></div></div>
      </div>
      <div class="p-defer"><u></u><span>推迟布局更新</span>更新</div>
    </div>`;
  }

  override render() {
    return html`<div class="window">
      <div class="titlebar">
        <div class="doc">工作簿3.xlsx - Excel</div>
        <div class="band-label">数据透视表工具</div>
        <div class="winbtns">
          <span class="wb1"><svg width="12" height="13" viewBox="0 0 12 13"><rect x=".5" y=".5" width="11" height="12" fill="none" stroke="#fff" /><path d="M1 3h10M6 10V5M4 7l2-2 2 2" stroke="#fff" fill="none" /></svg></span>
          <span class="wb2"><svg width="10" height="4" viewBox="0 0 10 4"><rect width="10" height="3" y="1" fill="#fff" /></svg></span>
          <span class="wb3"><svg width="11" height="13" viewBox="0 0 11 13"><path d="M.5.500h10v12H.5z" fill="none" stroke="#fff" /><rect width="11" height="3" fill="#fff" /></svg></span>
          <span class="wb4"><svg width="10" height="12" viewBox="0 0 10 12"><path d="M1 1l8 10M9 1L1 11" stroke="#fff" stroke-width="1.800" /></svg></span>
        </div>
      </div>
      <div class="tabs">
        <div class="tabset">
          <div class="tab file">文件</div><div class="tab on">开始</div>
          ${['插入', '页面布局', '公式', '数据', '审阅', '视图', '开发工具', 'PDF工具集', '百度网盘'].map((t) => html`<div class="tab">${t}</div>`)}
        </div>
        <div class="band"><div class="tab">分析</div><div class="tab">设计</div></div>
        <div class="tell">${ic.bulb}告诉我您想要做什么...</div>
        <div class="login">登录</div>
        <div class="share">${ic.person}共享</div>
      </div>
      ${this.renderRibbon()}
      <div class="qat">
        ${ic.save}
        <span class="m1">${ic.redo}</span><span class="dn m2"></span>
        <span class="m3">${ic.undo}</span><span class="dn m4"></span>
        <span class="m5">${ic.printPrev}</span>
        <span class="m6">${ic.preview}</span>
      </div>
      <div class="fbar">
        <div class="box name">G34<span class="dn"></span></div>
        <div class="dots">⋮</div>
        <div class="box fxs">${line('M1 1l9 9M10 1l-9 9', 11, 11, '#c0c0c0')}${line('M1 6l3 4 7-9', 12, 11, '#c0c0c0')}<span class="fx">fx</span></div>
        <div class="box input">94${line('M1 2l4 4 4-4', 10, 8, '#666')}</div>
      </div>
      <div class="main">
        <div class="left">
          <div class="upper">
            ${this.renderSheet()}
            <div class="vscroll"><div class="vup"></div><div class="vthumb"></div></div>
          </div>
          <div class="tabbar">
            <div class="nav"><i></i><i></i></div>
            <div class="st act">成绩表</div>
            <div class="st">员工信息</div><span class="tsep"></span>
            <div class="st">田字格</div><span class="tsep"></span>
            <div class="st blue">XXX公司销售额</div>
            <div class="st orange">课程表</div><span class="tsep"></span>
            <div class="st s5">Sheet5</div><span class="tsep"></span>
            <div class="plus">+</div>
            <div class="tdots">⋮</div>
            <div class="hs"><div class="hbtn"></div><div class="hthumb"></div><div class="htrack"></div><div class="hbtn r"></div></div>
          </div>
        </div>
        ${this.renderPanel()}
      </div>
      <div class="status">
        就绪<span class="gp">数字</span><span class="gp2">${ic.calc}</span>
        <div class="views"><b></b><s></s><s></s><div class="slider"><i></i></div></div>
      </div>
    </div>
    <div class="wm">
      <div class="wm-l">
        <div class="wm-cn">电脑技术网</div>
        <div class="wm-en">www.tagxp.com</div>
      </div>
      <div class="wm-tag">TAG<span class="wm-faint">极光下载站</span><span class="wm-ime">CH ♪ 简</span><span class="wm-pct">80%</span></div>
    </div>`;
  }
}

declare global {
  interface HTMLElementTagNameMap {
    'app-root': AppRoot;
  }
}
